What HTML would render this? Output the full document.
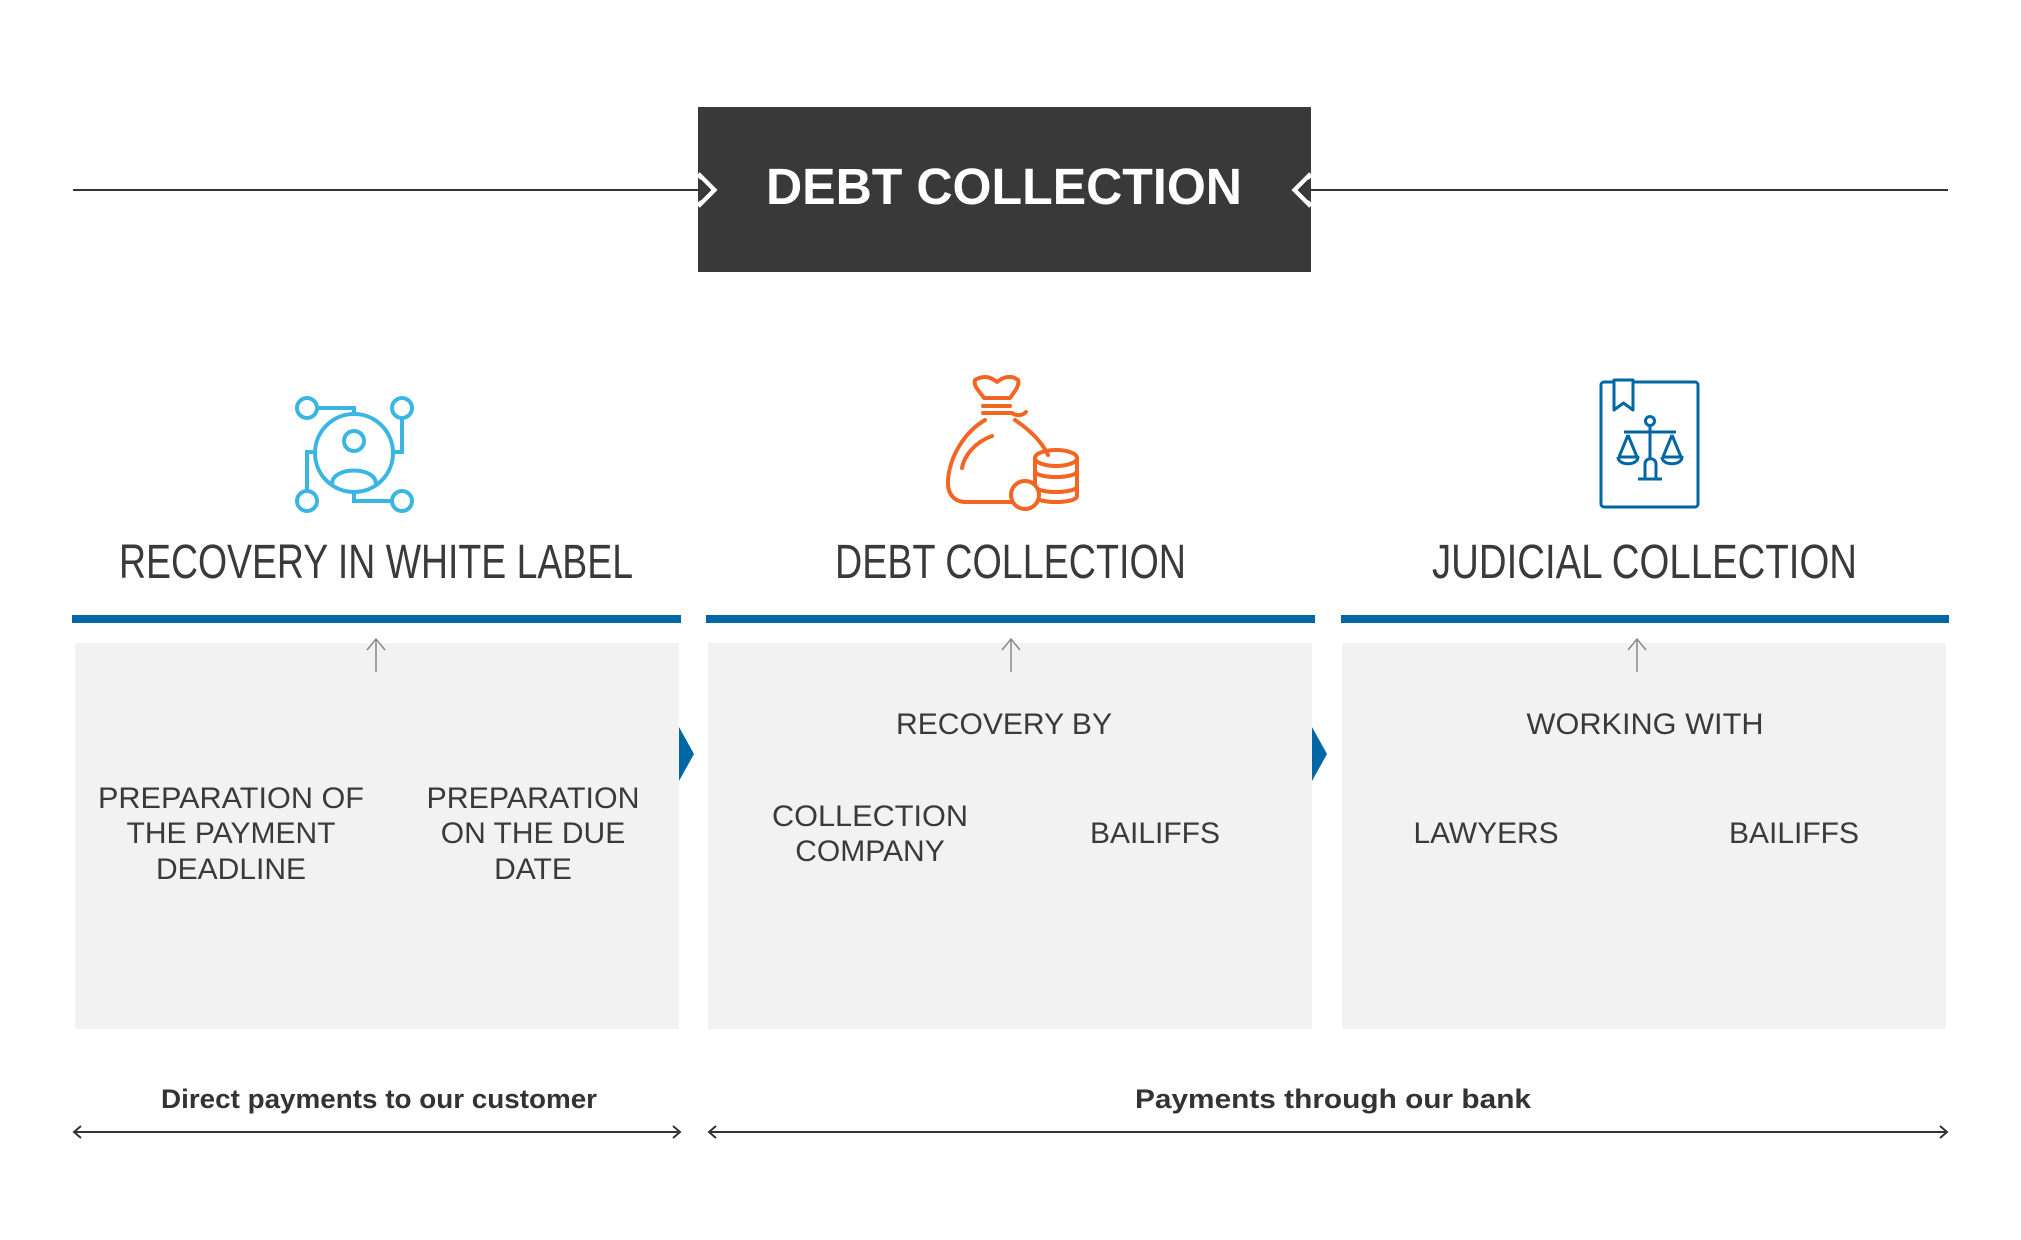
<!DOCTYPE html>
<html><head><meta charset="utf-8"><style>html,body{margin:0;padding:0;background:#fff}svg{display:block}</style></head>
<body>
<svg width="2021" height="1240" viewBox="0 0 2021 1240" xmlns="http://www.w3.org/2000/svg" font-family="Liberation Sans, sans-serif">
<rect width="2021" height="1240" fill="#fff"/>
<line x1="73" y1="190" x2="712" y2="190" stroke="#333" stroke-width="2"/>
<line x1="1298" y1="190" x2="1948" y2="190" stroke="#333" stroke-width="2"/>
<rect x="698" y="107" width="613" height="165" fill="#393939"/>
<polyline points="698,174 714,190 698,206" fill="none" stroke="#fff" stroke-width="5"/>
<polyline points="700,180 710,190 700,200" fill="none" stroke="#333" stroke-width="2"/>
<polyline points="1311,174 1295,190 1311,206" fill="none" stroke="#fff" stroke-width="5"/>
<polyline points="1309,180 1299,190 1309,200" fill="none" stroke="#333" stroke-width="2"/>
<text x="766" y="204" font-size="51" font-weight="bold" fill="#fff" textLength="476" lengthAdjust="spacingAndGlyphs">DEBT COLLECTION</text>

<g fill="none" stroke="#3bb5e3" stroke-width="4">
<circle cx="354" cy="453" r="39"/>
<circle cx="354" cy="441" r="10"/>
<path d="M332,484 C332,466 376,466 376,484"/>
<circle cx="307" cy="408" r="10"/><circle cx="402" cy="408" r="10"/>
<circle cx="307" cy="501" r="10"/><circle cx="402" cy="501" r="10"/>
<path d="M317,408 H354 V414"/>
<path d="M402,418 V452 H393"/>
<path d="M307,491 V452 H315"/>
<path d="M392,501 H354 V492"/>
</g>

<g fill="none" stroke="#f26522" stroke-width="4" stroke-linecap="round" stroke-linejoin="round">
<path d="M975,380 C985,374 992,378 997,382 C1002,378 1010,374 1018,380 C1020,386 1014,392 1010,398 L984,398 C980,392 973,386 975,380 Z"/>
<path d="M983,406 H1010"/><path d="M983,413 H1012 C1016,416 1022,416 1026,412"/>
<path d="M985,420 C965,432 950,455 948,480 C947,495 955,502 966,502 L1011,502"/>
<path d="M1015,420 C1030,430 1042,442 1048,455"/>
<path d="M992,436 C975,442 964,456 962,468"/>
<ellipse cx="1056" cy="458" rx="21" ry="8"/>
<path d="M1035,458 V496 C1035,504 1077,504 1077,496 V458"/>
<path d="M1035,471 C1035,479 1077,479 1077,471"/>
<path d="M1035,486 C1035,494 1077,494 1077,486"/>
<circle cx="1025" cy="495" r="14" fill="#fff"/>
</g>

<g fill="none" stroke="#0067a5" stroke-width="3" stroke-linejoin="round">
<rect x="1601" y="382" width="97" height="125" rx="3"/>
<path d="M1614,380 H1633 V410 L1623.5,403 L1614,410 Z" fill="#fff"/>
<circle cx="1650" cy="421" r="4.5"/>
<path d="M1650,426 V458"/>
<path d="M1624,432 H1676"/>
<path d="M1628,435 L1619,457 M1628,435 L1637,457 M1618,457 H1638 C1638,466 1618,466 1618,457"/>
<path d="M1672,435 L1663,457 M1672,435 L1681,457 M1662,457 H1682 C1682,466 1662,466 1662,457"/>
<path d="M1645,478 V464 C1645,457 1656,457 1656,464 V478"/>
<path d="M1638,479 H1662"/>
</g>

<g fill="#3a3a3a" font-size="48">
<text x="119" y="578" textLength="514" lengthAdjust="spacingAndGlyphs">RECOVERY IN WHITE LABEL</text>
<text x="835" y="578" textLength="351" lengthAdjust="spacingAndGlyphs">DEBT COLLECTION</text>
<text x="1432" y="578" textLength="425" lengthAdjust="spacingAndGlyphs">JUDICIAL COLLECTION</text>
</g>

<rect x="72" y="615" width="609" height="8" fill="#0067a5"/>
<rect x="706" y="615" width="609" height="8" fill="#0067a5"/>
<rect x="1341" y="615" width="608" height="8" fill="#0067a5"/>

<rect x="75" y="643" width="604" height="386" fill="#f2f2f2"/>
<rect x="708" y="643" width="604" height="386" fill="#f2f2f2"/>
<rect x="1342" y="643" width="604" height="386" fill="#f2f2f2"/>

<polygon points="679,727 694,754 679,781" fill="#0067a5"/>
<polygon points="1312,727 1327,754 1312,781" fill="#0067a5"/>

<g fill="none" stroke="#888" stroke-width="1.5">
<path d="M376,672 V639 M367,650 L376,639 L385,650"/>
<path d="M1011,672 V639 M1002,650 L1011,639 L1020,650"/>
<path d="M1637,672 V639 M1628,650 L1637,639 L1646,650"/>
</g>

<g fill="#3a3a3a" font-size="30" text-anchor="middle">
<text x="231" y="808" textLength="266" lengthAdjust="spacingAndGlyphs">PREPARATION OF</text>
<text x="231" y="843">THE PAYMENT</text>
<text x="231" y="879">DEADLINE</text>
<text x="533" y="808" textLength="213" lengthAdjust="spacingAndGlyphs">PREPARATION</text>
<text x="533" y="843">ON THE DUE</text>
<text x="533" y="879">DATE</text>
<text x="1004" y="734" textLength="216" lengthAdjust="spacingAndGlyphs">RECOVERY BY</text>
<text x="870" y="826" textLength="196" lengthAdjust="spacingAndGlyphs">COLLECTION</text>
<text x="870" y="861">COMPANY</text>
<text x="1155" y="843" textLength="130" lengthAdjust="spacingAndGlyphs">BAILIFFS</text>
<text x="1645" y="734" textLength="237" lengthAdjust="spacingAndGlyphs">WORKING WITH</text>
<text x="1486" y="843" textLength="145" lengthAdjust="spacingAndGlyphs">LAWYERS</text>
<text x="1794" y="843" textLength="130" lengthAdjust="spacingAndGlyphs">BAILIFFS</text>
</g>

<g fill="#333" font-size="27" font-weight="bold" text-anchor="middle">
<text x="379" y="1108" textLength="436" lengthAdjust="spacingAndGlyphs">Direct payments to our customer</text>
<text x="1333" y="1108" textLength="396" lengthAdjust="spacingAndGlyphs">Payments through our bank</text>
</g>

<g fill="none" stroke="#333" stroke-width="2">
<path d="M74,1132 H680 M81,1126 L74,1132 L81,1138 M673,1126 L680,1132 L673,1138"/>
<path d="M709,1132 H1947 M716,1126 L709,1132 L716,1138 M1940,1126 L1947,1132 L1940,1138"/>
</g>
</svg>
</body></html>
